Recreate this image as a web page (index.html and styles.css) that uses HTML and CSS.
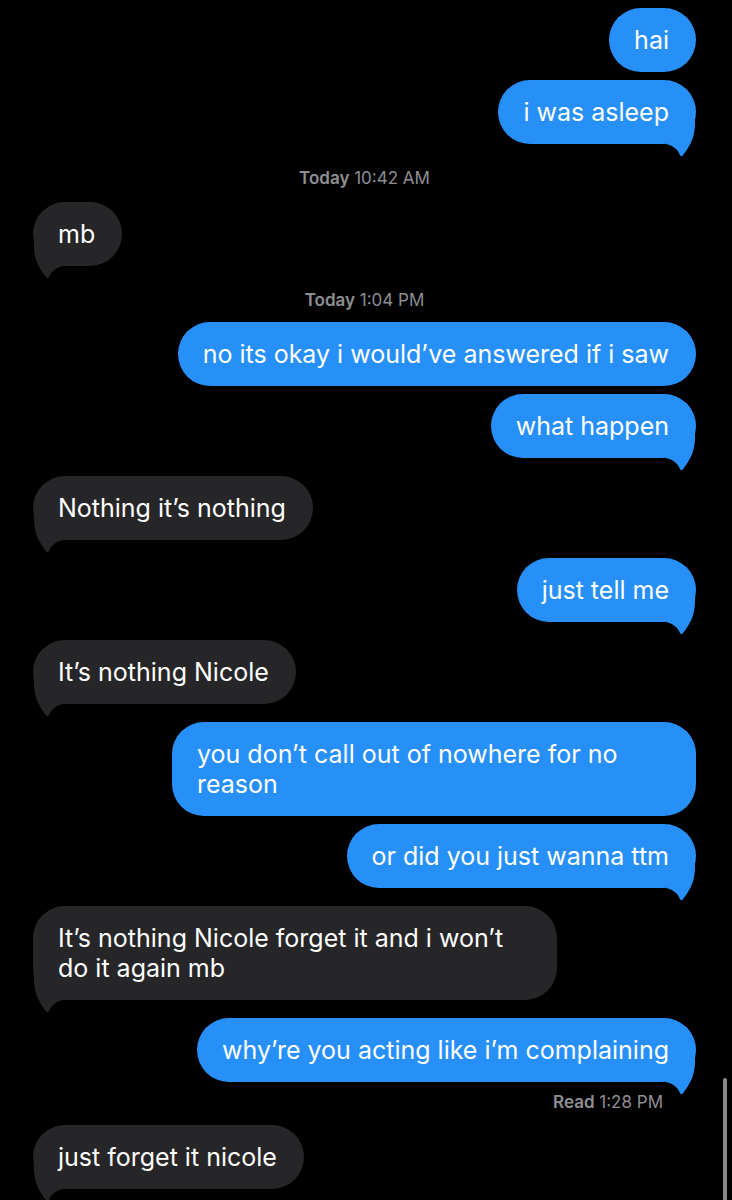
FILE: index.html
```html
<!doctype html>
<html>

<head>
    <meta charset="utf8">
    <meta name="viewport" content="width=device-width, initial-scale=1">
    <title>Messages</title>
    <link rel="stylesheet" href="styles.css">
</head>

<body>
    <section class="chat">
        <div class="msg out">hai</div>
        <div class="msg out tail">i was asleep
            <svg class="tip" viewBox="0 0 30 38"><path d="M1,0 C0.5,14 4,24 13,35 Q14.5,37.5 16,35 C18,30 22,26 30,24 L30,0 Z"/></svg>
        </div>

        <p class="stamp"><b>Today</b> 10:42 AM</p>

        <div class="msg in tail">mb
            <svg class="tip" viewBox="0 0 30 38"><path d="M1,0 C0.5,14 4,24 13,35 Q14.5,37.5 16,35 C18,30 22,26 30,24 L30,0 Z"/></svg>
        </div>

        <p class="stamp second"><b>Today</b> 1:04 PM</p>

        <div class="msg out">no its okay i would’ve answered if i saw</div>
        <div class="msg out tail">what happen
            <svg class="tip" viewBox="0 0 30 38"><path d="M1,0 C0.5,14 4,24 13,35 Q14.5,37.5 16,35 C18,30 22,26 30,24 L30,0 Z"/></svg>
        </div>

        <div class="msg in tail">Nothing it’s nothing
            <svg class="tip" viewBox="0 0 30 38"><path d="M1,0 C0.5,14 4,24 13,35 Q14.5,37.5 16,35 C18,30 22,26 30,24 L30,0 Z"/></svg>
        </div>

        <div class="msg out tail">just tell me
            <svg class="tip" viewBox="0 0 30 38"><path d="M1,0 C0.5,14 4,24 13,35 Q14.5,37.5 16,35 C18,30 22,26 30,24 L30,0 Z"/></svg>
        </div>

        <div class="msg in tail">It’s nothing Nicole
            <svg class="tip" viewBox="0 0 30 38"><path d="M1,0 C0.5,14 4,24 13,35 Q14.5,37.5 16,35 C18,30 22,26 30,24 L30,0 Z"/></svg>
        </div>

        <div class="msg out">you don’t call out of nowhere for no reason</div>
        <div class="msg out tail">or did you just wanna ttm
            <svg class="tip" viewBox="0 0 30 38"><path d="M1,0 C0.5,14 4,24 13,35 Q14.5,37.5 16,35 C18,30 22,26 30,24 L30,0 Z"/></svg>
        </div>

        <div class="msg in tail">It’s nothing Nicole forget it and i won’t do it again mb
            <svg class="tip" viewBox="0 0 30 38"><path d="M1,0 C0.5,14 4,24 13,35 Q14.5,37.5 16,35 C18,30 22,26 30,24 L30,0 Z"/></svg>
        </div>

        <div class="msg out tail">why’re you acting like i’m complaining
            <svg class="tip" viewBox="0 0 30 38"><path d="M1,0 C0.5,14 4,24 13,35 Q14.5,37.5 16,35 C18,30 22,26 30,24 L30,0 Z"/></svg>
        </div>
        <p class="receipt"><b>Read</b> 1:28 PM</p>

        <div class="msg in tail">just forget it nicole
            <svg class="tip" viewBox="0 0 30 38"><path d="M1,0 C0.5,14 4,24 13,35 Q14.5,37.5 16,35 C18,30 22,26 30,24 L30,0 Z"/></svg>
        </div>
    </section>
    <div class="scrollbar"></div>
</body>

</html>
```

FILE: styles.css
```css
* {
    font-family: Inter, 'Liberation Sans', sans-serif;
    box-sizing: border-box;
}

html,
body {
    margin: 0px;
    padding: 0px;
    background-color: #000;
    height: 1200px;
    overflow: hidden;
}

.chat {
    display: flex;
    flex-direction: column;
    padding: 0px 36px 0px 33px;
}

.msg {
    position: relative;
    z-index: 0;
    max-width: 524px;
    margin-top: 8px;
    padding: 17px 27px 17px 25px;
    border-radius: 32px;
    font-size: 25px;
    line-height: 30px;
    color: #fff;
}

.msg.tail {
    margin-bottom: 10px;
}

.out {
    align-self: flex-end;
    background-color: #2690f8;
}

.in {
    align-self: flex-start;
    background-color: #262628;
}

/* tail sits under the text so descenders stay visible */
.tip {
    position: absolute;
    z-index: -1;
    bottom: -14px;
    width: 30px;
    height: 38px;
}

.in .tip {
    left: 0px;
    fill: #262628;
}

.out .tip {
    right: 0px;
    fill: #2690f8;
    transform: scaleX(-1);
}

.stamp,
.receipt {
    margin: 13px 0px 5px;
    font-size: 17px;
    line-height: 22px;
    color: #8e8e93;
}

.stamp {
    text-align: center;
}

.stamp.second {
    margin-bottom: 3px;
}

.receipt {
    margin: -1px 33px 4px 0px;
    text-align: right;
}

.stamp b,
.receipt b {
    font-weight: 600;
}

.scrollbar {
    position: absolute;
    right: 5px;
    top: 1078px;
    width: 4px;
    height: 130px;
    border-radius: 2px;
    background-color: #8a8a8c;
}
```
